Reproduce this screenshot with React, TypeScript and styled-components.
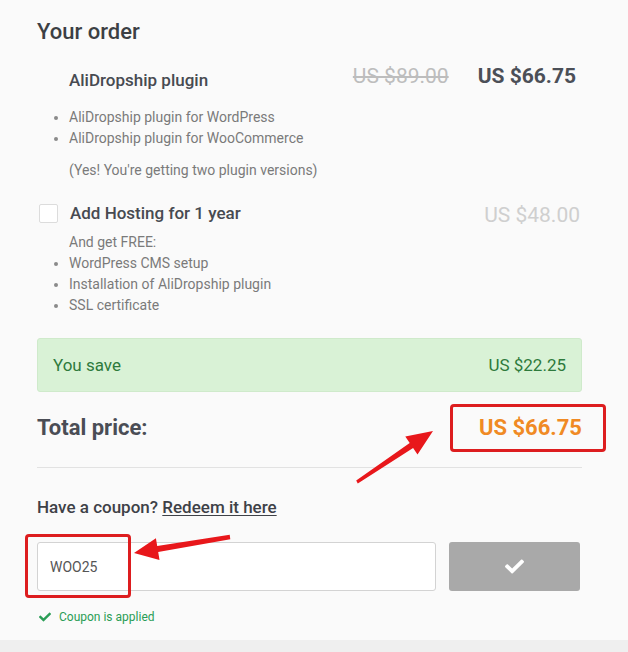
import React from 'react';
import styled, { createGlobalStyle } from 'styled-components';
import { FaCheck } from 'react-icons/fa';

const GlobalStyle = createGlobalStyle`
  html, body {
    margin: 0;
    padding: 0;
    background: #efefef;
  }
  body {
    font-family: Roboto, 'Liberation Sans', sans-serif;
    -webkit-font-smoothing: antialiased;
  }
`;

// 주문 데이터
const pluginItems = [
  'AliDropship plugin for WordPress',
  'AliDropship plugin for WooCommerce',
];

const hostingItems = [
  'WordPress CMS setup',
  'Installation of AliDropship plugin',
  'SSL certificate',
];

function App() {
  return (
    <>
      <GlobalStyle />
      <Page>
        <Panel>
          <Title>Your order</Title>

          <ProductRow>
            <ProductName>AliDropship plugin</ProductName>
            <Prices>
              <OldPrice>US $89.00</OldPrice>
              <NewPrice>US $66.75</NewPrice>
            </Prices>
          </ProductRow>
          <Bullets $top={17}>
            {pluginItems.map((item) => (
              <li key={item}>{item}</li>
            ))}
          </Bullets>
          <Note>(Yes! You're getting two plugin versions)</Note>

          <HostingRow>
            <Checkbox />
            <ProductName $offset={0}>Add Hosting for 1 year</ProductName>
            <HostingPrice>US $48.00</HostingPrice>
          </HostingRow>
          <SubNote>And get FREE:</SubNote>
          <Bullets $top={0}>
            {hostingItems.map((item) => (
              <li key={item}>{item}</li>
            ))}
          </Bullets>

          <SaveBox>
            <span>You save</span>
            <span>US $22.25</span>
          </SaveBox>

          <TotalRow>
            <TotalLabel>Total price:</TotalLabel>
            <TotalValue>US $66.75</TotalValue>
          </TotalRow>

          <Divider />

          <CouponTitle>
            Have a coupon? <Redeem href="#">Redeem it here</Redeem>
          </CouponTitle>

          <CouponRow>
            <CouponInput defaultValue="WOO25" />
            <ApplyButton type="button">
              <FaCheck size={19} />
            </ApplyButton>
          </CouponRow>

          <Applied>
            <FaCheck size={12} />
            <span>Coupon is applied</span>
          </Applied>
        </Panel>
        <Footer />

        {/* 스크린샷 표시 (빨간 박스, 화살표) */}
        <Mark $x={450} $y={404} $w={156} $h={48} />
        <Mark $x={25} $y={534} $w={106} $h={64} />
        <Arrows width="628" height="652" viewBox="0 0 628 652">
          <polygon
            fill="#e8171b"
            points="357.8,483.4 413.1,448.0 417.5,454.6 433,431 405.3,436.4 409.7,443.0 356.2,480.6"
          />
          <polygon
            fill="#e8171b"
            points="230.3,539.2 158.2,552.1 159.5,560.0 134,553 155.9,538.2 157.2,546.1 229.7,534.8"
          />
        </Arrows>
      </Page>
    </>
  );
}

const Page = styled.div`
  position: relative;
  width: 628px;
  height: 652px;
  overflow: hidden;
  display: flex;
  flex-direction: column;
`;

const Panel = styled.div`
  background: #fafafa;
  height: 640px;
  box-sizing: border-box;
  padding: 17px 46px 0 37px;
  display: flex;
  flex-direction: column;
`;

const Footer = styled.div`
  height: 12px;
  background: #efefef;
`;

const Title = styled.h2`
  margin: 0;
  font-size: 22px;
  line-height: 30px;
  font-weight: 500;
  color: #3c3f44;
`;

const ProductRow = styled.div`
  display: flex;
  align-items: flex-start;
  justify-content: space-between;
  margin-top: 15px;
  padding-left: 32px;
  padding-right: 6px;
  height: 28px;
`;

const ProductName = styled.div<{ $offset?: number }>`
  font-size: 17px;
  line-height: 22px;
  font-weight: 500;
  color: #474a51;
  padding-top: ${(p) => (p.$offset ?? 7)}px;
  flex: 1;
`;

const Prices = styled.div`
  display: flex;
  gap: 29px;
  align-items: center;
  line-height: 28px;
`;

const OldPrice = styled.span`
  font-size: 21px;
  color: #bdbdbd;
  text-decoration: line-through;
`;

const NewPrice = styled.span`
  font-size: 21px;
  font-weight: 700;
  color: #4b4f57;
`;

const Bullets = styled.ul<{ $top: number }>`
  margin: ${(p) => p.$top}px 0 0;
  padding: 0 0 0 32px;
  font-size: 14px;
  line-height: 21px;
  color: #7a7a7a;

  li::marker {
    color: #8a8a8a;
  }
`;

const Note = styled.p`
  margin: 11px 0 0 32px;
  font-size: 14px;
  line-height: 21px;
  color: #7a7a7a;
`;

const HostingRow = styled.div`
  display: flex;
  align-items: flex-start;
  gap: 12px;
  margin-top: 21px;
  padding-left: 2px;
`;

const Checkbox = styled.span`
  width: 17px;
  height: 17px;
  margin-top: 2px;
  background: #fff;
  border: 1px solid #dcdcdc;
  border-radius: 2px;
  flex-shrink: 0;
`;

const HostingPrice = styled.span`
  font-size: 21px;
  line-height: 28px;
  color: #cfcfcf;
  margin-top: -1px;
  padding-right: 2px;
`;

const SubNote = styled.div`
  margin: 3px 0 0 32px;
  font-size: 14px;
  line-height: 21px;
  color: #7a7a7a;
`;

const SaveBox = styled.div`
  margin-top: 22px;
  height: 54px;
  box-sizing: border-box;
  padding: 0 15px;
  display: flex;
  align-items: center;
  justify-content: space-between;
  background: #d9f2d6;
  border: 1px solid #cfeacb;
  border-radius: 3px;
  font-size: 17px;
  color: #2e7a3c;
`;

const TotalRow = styled.div`
  display: flex;
  align-items: center;
  justify-content: space-between;
  margin-top: 20px;
  height: 30px;
  padding-right: 0;
`;

const TotalLabel = styled.span`
  font-size: 22px;
  font-weight: 700;
  color: #4a4d55;
`;

const TotalValue = styled.span`
  font-size: 22px;
  font-weight: 700;
  color: #f08a24;
`;

const Divider = styled.hr`
  margin: 25px 0 0;
  border: none;
  border-top: 1px solid #e2e2e2;
`;

const CouponTitle = styled.div`
  margin-top: 28px;
  font-size: 17px;
  line-height: 22px;
  font-weight: 500;
  color: #3e4147;
`;

const Redeem = styled.a`
  color: #3e4147;
  text-decoration: underline;
  text-underline-offset: 2px;
`;

const CouponRow = styled.div`
  display: flex;
  gap: 13px;
  margin-top: 24px;
  height: 49px;
  margin-right: 2px;
`;

const CouponInput = styled.input`
  width: 399px;
  box-sizing: border-box;
  height: 49px;
  border: 1px solid #d3d3d3;
  border-radius: 3px;
  background: #fff;
  padding: 0 12px;
  font-family: Roboto, 'Liberation Sans', sans-serif;
  font-size: 14px;
  color: #555;
  outline: none;
`;

const ApplyButton = styled.button`
  flex: 1;
  height: 49px;
  border: none;
  border-radius: 3px;
  background: #a9a9a9;
  color: #fff;
  display: flex;
  align-items: center;
  justify-content: center;
`;

const Applied = styled.div`
  margin-top: 18px;
  display: flex;
  align-items: center;
  gap: 8px;
  padding-left: 2px;
  font-size: 12px;
  color: #2a9d56;
  line-height: 16px;
`;

const Mark = styled.div<{ $x: number; $y: number; $w: number; $h: number }>`
  position: absolute;
  left: ${(p) => p.$x}px;
  top: ${(p) => p.$y}px;
  width: ${(p) => p.$w}px;
  height: ${(p) => p.$h}px;
  box-sizing: border-box;
  border: 3px solid #dd1d1f;
  border-radius: 4px;
  pointer-events: none;
`;

const Arrows = styled.svg`
  position: absolute;
  left: 0;
  top: 0;
  pointer-events: none;
`;

export default App;
